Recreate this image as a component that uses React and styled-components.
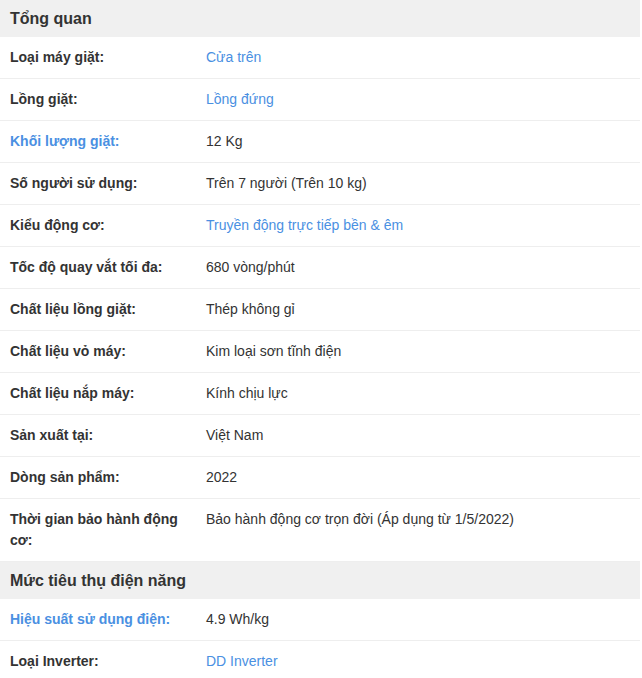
import React from "react";
import styled, { createGlobalStyle } from "styled-components";

const GlobalStyle = createGlobalStyle`
  body {
    margin: 0;
    background: #fff;
    font-family: "Liberation Sans", Arial, sans-serif;
  }
`;

const groups = [
  {
    title: "Tổng quan",
    rows: [
      { label: "Loại máy giặt:", value: "Cửa trên", valueLink: true },
      { label: "Lồng giặt:", value: "Lồng đứng", valueLink: true },
      { label: "Khối lượng giặt:", value: "12 Kg", labelLink: true },
      { label: "Số người sử dụng:", value: "Trên 7 người (Trên 10 kg)" },
      { label: "Kiểu động cơ:", value: "Truyền động trực tiếp bền & êm", valueLink: true },
      { label: "Tốc độ quay vắt tối đa:", value: "680 vòng/phút" },
      { label: "Chất liệu lồng giặt:", value: "Thép không gỉ" },
      { label: "Chất liệu vỏ máy:", value: "Kim loại sơn tĩnh điện" },
      { label: "Chất liệu nắp máy:", value: "Kính chịu lực" },
      { label: "Sản xuất tại:", value: "Việt Nam" },
      { label: "Dòng sản phẩm:", value: "2022" },
      { label: "Thời gian bảo hành động cơ:", value: "Bảo hành động cơ trọn đời (Áp dụng từ 1/5/2022)" },
    ],
  },
  {
    title: "Mức tiêu thụ điện năng",
    rows: [
      { label: "Hiệu suất sử dụng điện:", value: "4.9 Wh/kg", labelLink: true },
      { label: "Loại Inverter:", value: "DD Inverter", valueLink: true },
    ],
  },
];

const App = () => (
  <>
    <GlobalStyle />
    <Specs>
      {groups.map((g) => (
        <section key={g.title}>
          <GroupTitle>{g.title}</GroupTitle>
          <List>
            {g.rows.map((r) => (
              <Row key={r.label}>
                <Label $link={r.labelLink}>{r.label}</Label>
                <Value $link={r.valueLink}>{r.value}</Value>
              </Row>
            ))}
          </List>
        </section>
      ))}
    </Specs>
  </>
);

export default App;

const Specs = styled.div`
  width: 640px;
  font-size: 14px;
  color: #333;
`;

const GroupTitle = styled.h3`
  margin: 0;
  background: #f0f0f0;
  padding: 8px 10px 7px;
  font-size: 16px;
  line-height: 22px;
  font-weight: bold;
  color: #333;
`;

const List = styled.ul`
  margin: 0;
  padding: 0;
  list-style: none;
`;

const Row = styled.li`
  display: grid;
  grid-template-columns: 196px 1fr;
  padding: 10px;
  line-height: 21px;
  border-bottom: 1px solid #eee;
`;

const Label = styled.span`
  font-weight: bold;
  padding-right: 10px;
  color: ${(p) => (p.$link ? "#4a90e2" : "#333")};
`;

const Value = styled.span`
  color: ${(p) => (p.$link ? "#4a90e2" : "#333")};
`;
